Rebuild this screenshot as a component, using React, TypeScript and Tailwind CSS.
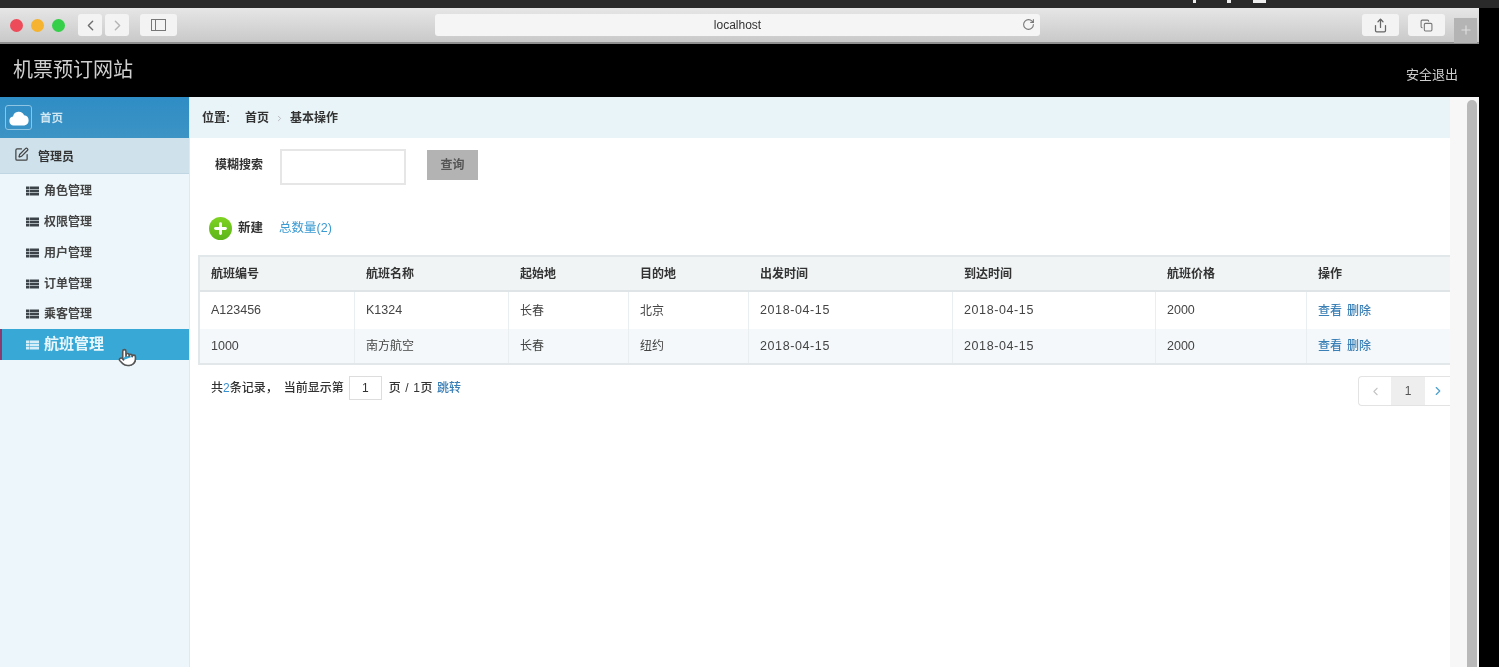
import { ChevronLeft, ChevronRight, RotateCw, Share, Copy, Plus, SquarePen, Pointer } from "lucide-react";

const font = { fontFamily: '"Liberation Sans","Noto Sans CJK SC",sans-serif' };

const ListIcon = ({ light }: { light?: boolean }) => (
  <svg width="13" height="10" viewBox="0 0 13 10" className="shrink-0">
    <g fill={light ? "#d5eef8" : "#3d4449"}>
      <rect x="0" y="0.5" width="3" height="2.6" />
      <rect x="3.5" y="0.5" width="9.5" height="2.6" />
      <rect x="0" y="3.7" width="3" height="2.6" />
      <rect x="3.5" y="3.7" width="9.5" height="2.6" />
      <rect x="0" y="6.9" width="3" height="2.6" />
      <rect x="3.5" y="6.9" width="9.5" height="2.6" />
    </g>
  </svg>
);

const menu = ["角色管理", "权限管理", "用户管理", "订单管理", "乘客管理"];
const cols = ["w-[155px]", "w-[154px]", "w-[120px]", "w-[120px]", "w-[204px]", "w-[203px]", "w-[151px]", "flex-1"];
const heads = ["航班编号", "航班名称", "起始地", "目的地", "出发时间", "到达时间", "航班价格", "操作"];
const rows = [
  ["A123456", "K1324", "长春", "北京", "2018-04-15", "2018-04-15", "2000"],
  ["1000", "南方航空", "长春", "纽约", "2018-04-15", "2018-04-15", "2000"],
];

function cellText(c: string) {
  if (/[\u4e00-\u9fff]/.test(c)) return "text-[12px]";
  if (c.includes("-")) return "text-[12.5px] tracking-[0.6px]";
  return "text-[12.5px]";
}

function Toolbar() {
  return (
    <div className="h-[36px] flex items-center bg-gradient-to-b from-[#e6e6e6] to-[#c9c9c9] border-b-2 border-[#8f8f8f] shrink-0 pl-[10px] pr-[2px]">
      <span className="w-[13px] h-[13px] rounded-full bg-[#ee4b5a]" />
      <span className="w-[13px] h-[13px] rounded-full bg-[#f5b32f] ml-[8px]" />
      <span className="w-[13px] h-[13px] rounded-full bg-[#35cf4a] ml-[8px]" />
      <span className="ml-[13px] w-[24px] h-[22px] bg-[#f3f3f3] rounded-[3px] flex items-center justify-center">
        <ChevronLeft size={17} className="text-[#6f6f6f]" />
      </span>
      <span className="ml-[3px] w-[24px] h-[22px] bg-[#f3f3f3] rounded-[3px] flex items-center justify-center">
        <ChevronRight size={17} className="text-[#b5b5b5]" />
      </span>
      <span className="ml-[11px] w-[37px] h-[22px] bg-[#f3f3f3] rounded-[3px] flex items-center justify-center">
        <span className="w-[15px] h-[12px] border border-[#777] flex">
          <span className="w-[4px] border-r border-[#777]" />
        </span>
      </span>
      <div className="ml-[258px] w-[605px] h-[22px] bg-[#f5f5f5] rounded-[3px] flex items-center relative justify-center text-[12px] text-[#333]">
        localhost
        <RotateCw size={13} className="absolute right-[5px] top-[4px] text-[#777]" />
      </div>
      <span className="ml-[322px] w-[37px] h-[22px] bg-[#f3f3f3] rounded-[3px] flex items-center justify-center">
        <Share size={15} className="text-[#666]" />
      </span>
      <span className="ml-[9px] w-[37px] h-[22px] bg-[#f3f3f3] rounded-[3px] flex items-center justify-center">
        <Copy size={13} className="text-[#777]" />
      </span>
      <span className="ml-[9px] w-[23px] h-[25px] mt-[10px] bg-[#b4b4b4] flex items-center justify-center">
        <Plus size={14} className="text-[#dedede]" />
      </span>
    </div>
  );
}

function Sidebar() {
  return (
    <aside className="w-[190px] shrink-0 bg-[#edf7fb] border-r border-[#dfe9ee] relative">
      <div className="h-[41px] bg-gradient-to-b from-[#2f8dc5] to-[#3c93c4] flex items-center pl-[5px]">
        <span className="w-[27px] h-[25px] rounded-[3px] border border-[#8ec5e2] flex items-center justify-center">
          <svg width="22" height="16" viewBox="0 0 20 15">
            <path d="M5 14.5a4.3 4.3 0 0 1-.6-8.5A5.5 5.5 0 0 1 14.8 5a4.8 4.8 0 0 1 .2 9.5z" fill="#fff" />
          </svg>
        </span>
        <span className="ml-[8px] mt-[2px] text-[11.5px] text-[#cfe6f3] font-bold">首页</span>
      </div>
      <div className="h-[36px] bg-[#cfe2ec] border-b border-[#c0d6e2] flex items-center pl-[14px] pt-[2px]">
        <SquarePen size={15} className="text-[#444] -mt-[5px]" />
        <span className="ml-[9px] text-[12px] text-[#333] font-bold">管理员</span>
      </div>
      <div className="pt-[1px]">
        {menu.map((m, i) => (
          <div key={m} className={`${i === 4 ? "h-[30px]" : "h-[31px]"} flex items-center pl-[26px] gap-[5px] text-[12px] text-[#444] font-bold`}>
            <ListIcon />
            {m}
          </div>
        ))}
        <div className="h-[31px] bg-[#38a8d6] border-l-2 border-[#8a3a6e] flex items-center pl-[24px] gap-[5px] text-[15px] text-[#eaf7fc] font-bold">
          <ListIcon light />
          航班管理
        </div>
      </div>
      <Pointer size={19} className="absolute left-[118px] top-[251px] text-[#555] fill-white" />
    </aside>
  );
}

function Table() {
  return (
    <div className="ml-[8px] mt-[15px] border-y-2 border-l-2 border-[#e2e7ea] text-[#444]">
      <div className="flex h-[35px] bg-[#f0f4f5] border-b-2 border-[#dfe4e7] items-center font-bold text-[12px] text-[#333]">
        {heads.map((h, i) => (
          <div key={h} className={`${cols[i]} pl-[11px]`}>{h}</div>
        ))}
      </div>
      {rows.map((r, ri) => (
        <div key={r[0]} className={`flex ${ri === 1 ? "h-[34px] bg-[#f4f8fa]" : "h-[37px] bg-white"}`}>
          {r.map((c, i) => (
            <div key={i} className={`${cols[i]} ${cellText(c)} pl-[11px] border-r border-[#e9eef1] flex items-center`}>{c}</div>
          ))}
          <div className="flex-1 pl-[11px] flex items-center gap-[5px] text-[#3a7fb5] text-[12px] font-medium">
            <span>查看</span><span>删除</span>
          </div>
        </div>
      ))}
    </div>
  );
}

export default function App() {
  return (
    <div className="w-[1499px] h-[667px] bg-black overflow-hidden flex flex-col [filter:blur(0.7px)]" style={font}>
      <div className="h-[8px] bg-[#2a2a2a] shrink-0 flex items-start pl-[1193px]">
        <span className="w-[3px] h-[3px] bg-[#eee]" />
        <span className="ml-[31px] w-[4px] h-[3px] bg-[#eee]" />
        <span className="ml-[22px] w-[13px] h-[3px] bg-[#eee]" />
      </div>
      <div className="w-[1479px] flex-1 flex flex-col min-h-0">
        <Toolbar />
        <header className="h-[53px] bg-black shrink-0 flex items-start justify-between pl-[13px] pr-[21px]">
          <span className="mt-[11px] text-[20px] text-[#d0d0d0]">机票预订网站</span>
          <span className="mt-[21px] text-[13px] text-[#cfcfcf]">安全退出</span>
        </header>
        <div className="flex-1 flex min-h-0">
          <Sidebar />
          <main className="w-[1260px] bg-white shrink-0 overflow-hidden">
            <div className="h-[41px] bg-[#e9f4f8] flex items-center pl-[12px] pt-[1px] text-[12px] font-bold text-[#333]">
              <span>位置:</span>
              <span className="ml-[15px]">首页</span>
              <ChevronRight size={9} className="mx-[6px] text-[#aaa]" />
              <span>基本操作</span>
            </div>
            <div className="flex items-center pl-[25px] pt-[6px] h-[47px]">
              <span className="text-[12px] text-[#333] font-bold mt-[1px]">模糊搜索</span>
              <input className="ml-[17px] w-[126px] h-[36px] mt-[4px] border-2 border-[#e6e6e6] bg-white" />
              <button className="ml-[21px] w-[51px] h-[30px] bg-[#b3b3b3] text-[12px] text-[#555] font-bold">查询</button>
            </div>
            <div className="flex items-center pl-[19px] mt-[31px] h-[24px]">
              <span className="w-[23px] h-[23px] rounded-full bg-gradient-to-b from-[#7ed321] to-[#5cb51a] flex items-center justify-center">
                <Plus size={17} strokeWidth={4} className="text-white" />
              </span>
              <span className="ml-[6px] text-[12.5px] text-[#333] font-bold">新建</span>
              <span className="ml-[16px] text-[12.5px] text-[#3b9ad2]">总数量(2)</span>
            </div>
            <Table />
            <div className="relative flex items-center pl-[21px] mt-[11px] h-[24px] text-[12px] text-[#333] font-medium">
              <span>共<span className="text-[#3a8fd0]">2</span>条记录，</span>
              <span className="ml-[6px]">当前显示第</span>
              <span className="ml-[5px] w-[33px] h-[24px] border border-[#ddd] flex items-center justify-center">1</span>
              <span className="ml-[7px] tracking-[0.6px]">页 / 1页</span>
              <span className="ml-[4px] text-[#3a7fb5]">跳转</span>
              <div className="absolute right-0 top-0 flex h-[30px] border border-[#e3e3e3] border-r-0 rounded-l-[4px] font-normal">
                <span className="w-[32px] flex items-center justify-center"><ChevronLeft size={13} className="text-[#c4c4c4]" /></span>
                <span className="w-[34px] bg-[#eeeeee] flex items-center justify-center text-[#555]">1</span>
                <span className="w-[25px] flex items-center justify-center"><ChevronRight size={14} className="text-[#4a9fd0]" /></span>
              </div>
            </div>
          </main>
          <div className="flex-1 bg-[#f7f7f7] flex justify-end pr-[2px] pl-[16px]">
            <div className="w-[10px] h-full mt-[3px] bg-[#b9b9b9] rounded-t-[5px]" />
          </div>
        </div>
      </div>
    </div>
  );
}
